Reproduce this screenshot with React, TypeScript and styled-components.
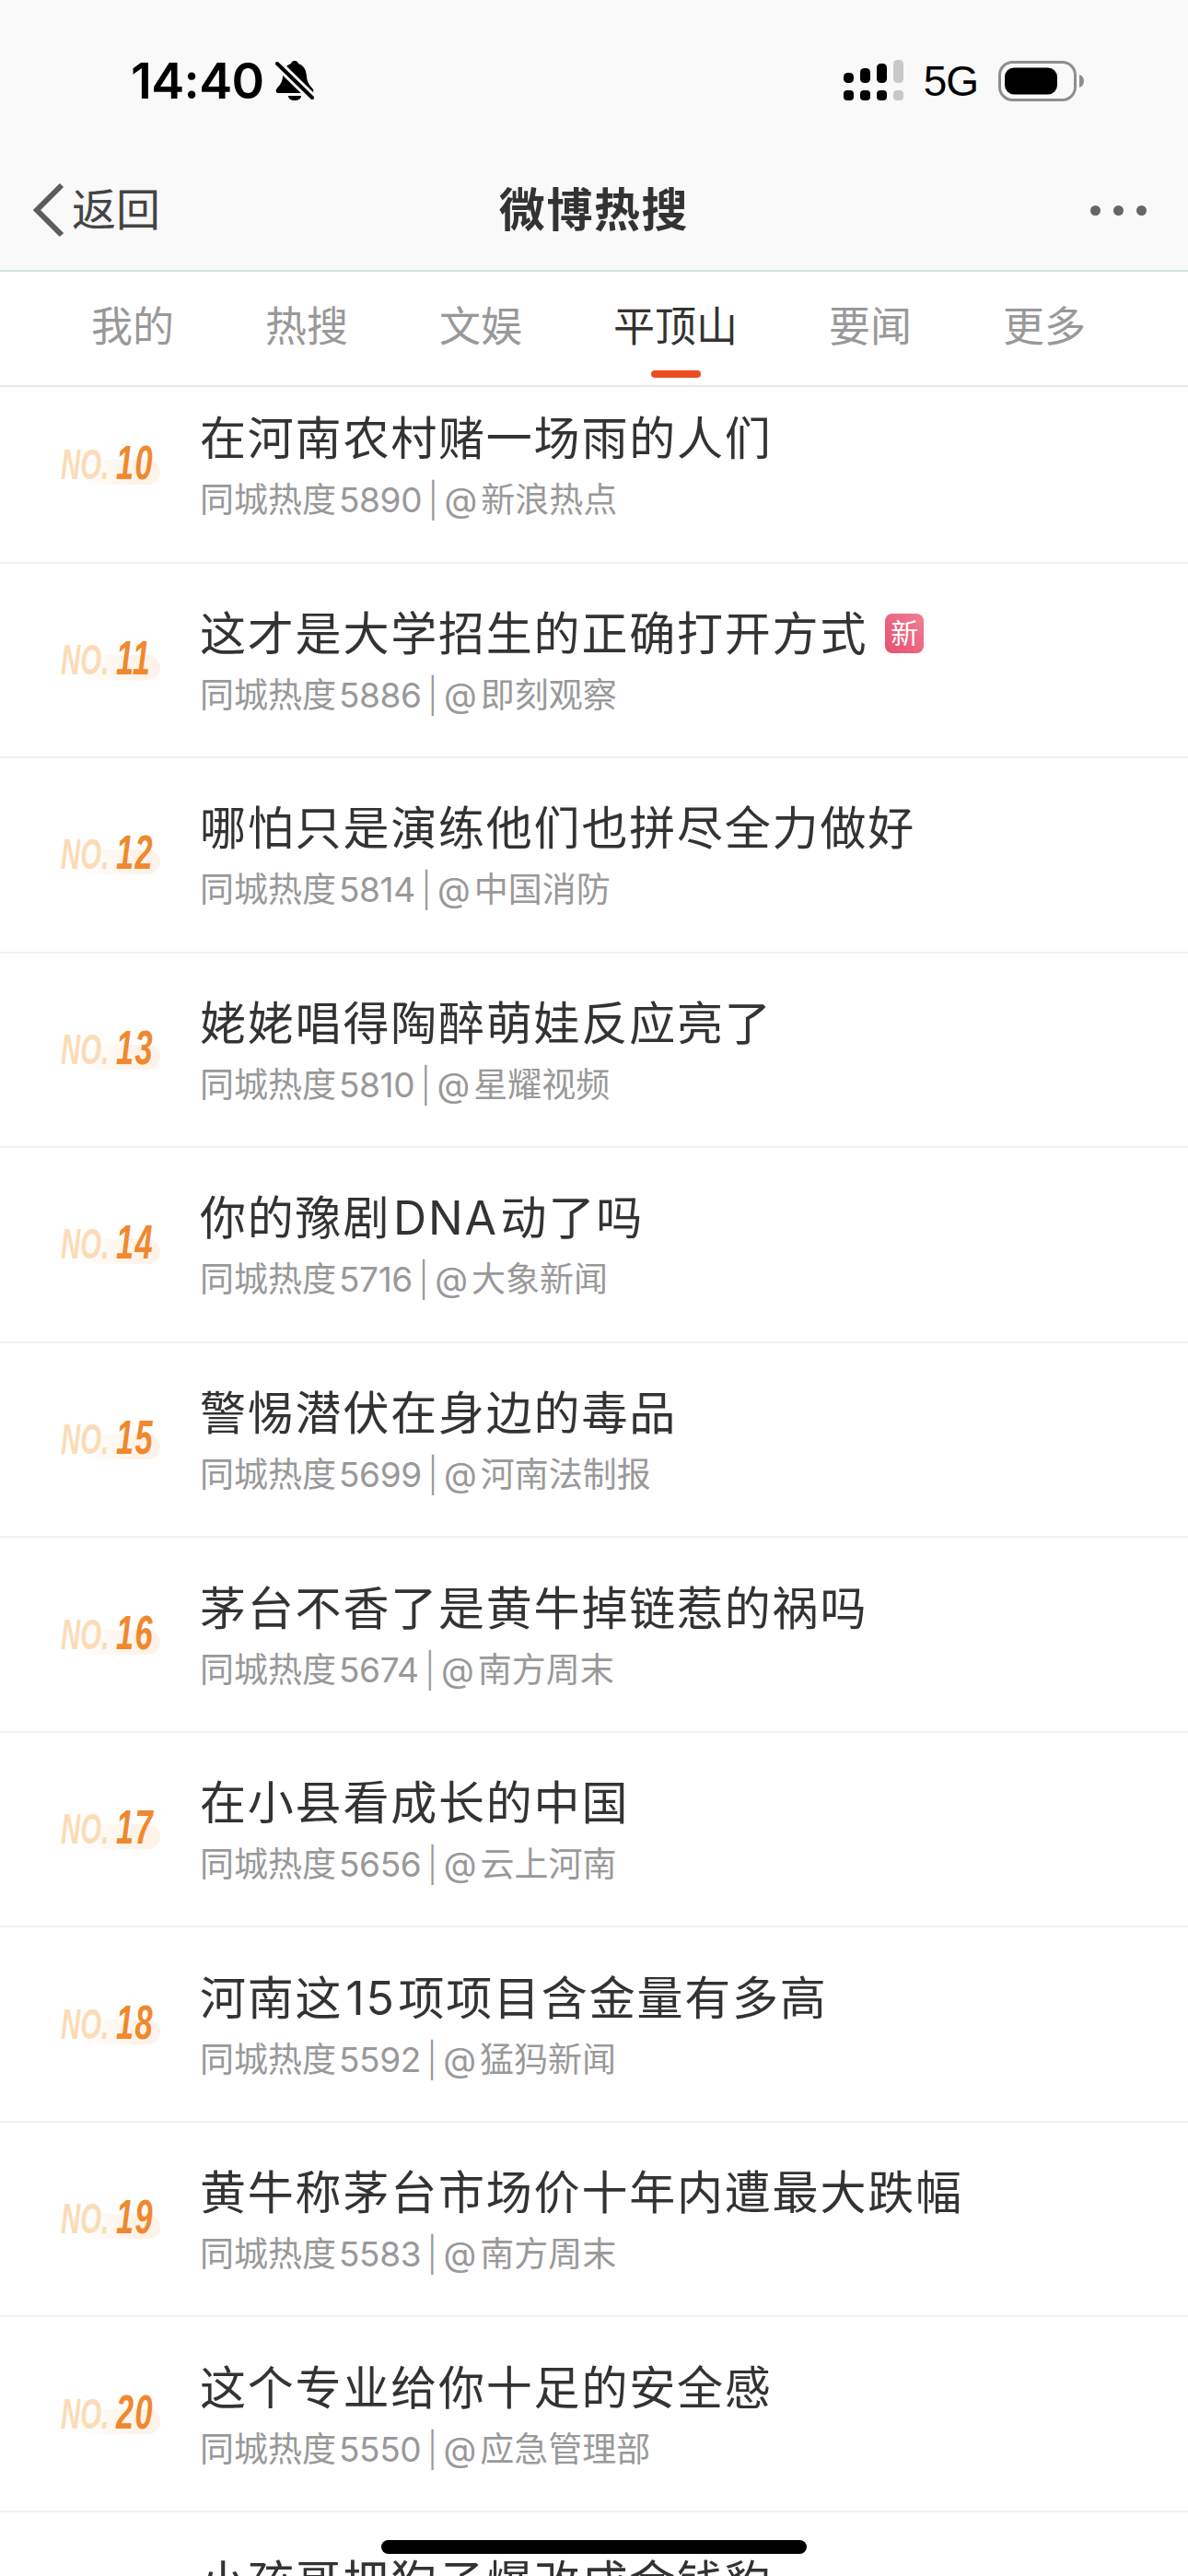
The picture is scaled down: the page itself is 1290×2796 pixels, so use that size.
import * as React from 'react'
import styled, { createGlobalStyle } from 'styled-components'

const GlobalStyle = createGlobalStyle`
  html, body {
    margin: 0;
    padding: 0;
    background: #ffffff;
  }
`

const UI_FONT = `Inter, "Noto Sans CJK SC", sans-serif`

const Screen = styled.div`
  width: 1290px;
  height: 2796px;
  position: relative;
  overflow: hidden;
  display: flex;
  flex-direction: column;
  background: #ffffff;
  font-family: ${UI_FONT};
`

const TopBar = styled.header`
  flex: none;
  background: #f9f9f9;
  border-bottom: 2px solid #d2e4da;
`

const StatusBar = styled.div`
  height: 175px;
  display: flex;
  align-items: center;
  justify-content: space-between;
  padding: 0 113px 0 142px;
  box-sizing: border-box;
`

const StatusLeft = styled.div`
  display: flex;
  align-items: center;
  gap: 12px;
`

const Time = styled.span`
  font-size: 54px;
  font-weight: 600;
  line-height: 60px;
  letter-spacing: -0.6px;
  color: #000000;
`

const StatusRight = styled.div`
  display: flex;
  align-items: center;
`

const NetworkLabel = styled.span`
  font-family: "Liberation Sans", sans-serif;
  font-size: 46px;
  line-height: 50px;
  letter-spacing: -1px;
  color: #000000;
  margin: 0 22px 0 22px;
`

const NavBar = styled.nav`
  height: 118px;
  display: grid;
  grid-template-columns: 1fr auto 1fr;
  align-items: center;
  padding: 0 36px 12px;
  box-sizing: border-box;
`

const BackLink = styled.div`
  display: flex;
  align-items: center;
  gap: 8px;
  font-size: 48px;
  line-height: 60px;
  color: #444444;
`

const PageTitle = styled.h1`
  margin: 0;
  font-size: 50px;
  line-height: 60px;
  letter-spacing: 1.6px;
  font-weight: 700;
  color: #333333;
`

const MoreDots = styled.div`
  justify-self: end;
  display: flex;
  gap: 14px;
  margin-right: 9px;
`

const Dot = styled.span`
  width: 11px;
  height: 11px;
  border-radius: 50%;
  background: #666666;
`

const TabBar = styled.div`
  flex: none;
  height: 125px;
  display: flex;
  gap: 99px;
  padding: 32px 0 0 99px;
  box-sizing: border-box;
  border-bottom: 2px solid #e8e8e8;
`

const Tab = styled.div`
  display: flex;
  flex-direction: column;
  align-items: center;
`

const TabLabel = styled.span<{ $active?: boolean }>`
  font-size: 45px;
  line-height: 56px;
  color: ${p => (p.$active ? '#333333' : '#999999')};
`

const TabMarker = styled.span`
  width: 54px;
  height: 8px;
  margin-top: 19px;
  border-radius: 4px;
  background: #ed4d23;
`

const ListViewport = styled.div`
  flex: 1;
  min-height: 0;
  overflow: hidden;
`

const List = styled.ul`
  list-style: none;
  margin: -20px 0 0;
  padding: 0;
`

const Row = styled.li`
  height: 211.56px;
  box-sizing: border-box;
  border-bottom: 2px solid #f2f2f2;
  display: flex;
  align-items: center;
  padding-left: 66px;
`

const Rank = styled.div`
  flex: none;
  width: 151px;
  height: 43px;
  position: relative;
`

const RankPill = styled.span`
  position: absolute;
  left: 21px;
  top: 16px;
  width: 87px;
  height: 27px;
  border-radius: 0 14px 14px 0;
  background: linear-gradient(90deg, rgba(253, 243, 232, 0) 0%, #fdf3e8 70%, #fdf3e8 100%);
`

const RankPrefix = styled.span`
  position: absolute;
  left: 0;
  top: 0;
  font-family: "Liberation Sans", sans-serif;
  font-size: 46px;
  font-weight: 700;
  font-style: italic;
  line-height: 43px;
  color: #fbdcb6;
  white-space: nowrap;
  transform-origin: left center;
  transform: scaleX(0.64);
`

const RankNumber = styled.span`
  position: absolute;
  left: 60px;
  top: -5px;
  font-family: "Liberation Sans", sans-serif;
  font-size: 52px;
  font-weight: 700;
  font-style: italic;
  line-height: 48px;
  letter-spacing: 2px;
  color: #f0882e;
  white-space: nowrap;
  transform-origin: left center;
  transform: scaleX(0.66);
`

const RowText = styled.div`
  min-width: 0;
`

const TitleLine = styled.div`
  display: flex;
  align-items: center;
  gap: 19px;
  font-size: 50px;
  line-height: 70px;
  letter-spacing: 1.8px;
  word-spacing: -13px;
  color: #333333;
  white-space: nowrap;
`

const NewBadge = styled.span`
  width: 42px;
  height: 43px;
  border-radius: 8px;
  display: flex;
  align-items: center;
  justify-content: center;
  font-size: 30px;
  line-height: 43px;
  letter-spacing: 0;
  color: #ffffff;
  background: linear-gradient(45deg, #e74f6f 0%, #f07f93 100%);
`

const SubLine = styled.div`
  margin-top: 7px;
  font-size: 37px;
  line-height: 50px;
  word-spacing: -4px;
  color: #999999;
  white-space: nowrap;
`

const HeatValue = styled.span`
  margin-left: 3px;
  letter-spacing: -0.4px;
`

const Divider = styled.span`
  font-weight: 300;
`

const AtSign = styled.span`
  margin-right: 4px;
`

const HomeIndicator = styled.div`
  position: absolute;
  left: 414px;
  bottom: 24px;
  width: 462px;
  height: 15px;
  border-radius: 8px;
  background: #000000;
`

const BellOff = () => (
  <svg width="42" height="45" viewBox="0 0 42 45">
    <path
      d="M21 1c-2 0-3.500 1.200-4 3C11 6 8.500 11 8 18 7.600 25 4 28 1 32c-1 2 0 4 2 4h36c2 0 3-2 2-4C38 28 34.400 25 34 18 33.500 11 31 6 25 4 24.500 2.200 23 1 21 1z"
      fill="#000"
    />
    <path d="M14 39h14c0 3-3 5-7 5s-7-2-7-5z" fill="#000" />
    <line x1="1" y1="3" x2="41" y2="42" stroke="#f9f9f9" strokeWidth="10" />
    <line x1="2" y1="4" x2="40" y2="41" stroke="#000" strokeWidth="4" strokeLinecap="round" />
  </svg>
)

const SignalDots = () => (
  <svg width="65" height="45" viewBox="0 0 65 45">
    <rect x="0" y="14" width="11" height="11" rx="4.500" fill="#000" />
    <rect x="18" y="9" width="11" height="16" rx="4.500" fill="#000" />
    <rect x="36" y="4" width="11" height="21" rx="4.500" fill="#000" />
    <rect x="54" y="0" width="11" height="25" rx="4.500" fill="#c8c8c8" />
    <rect x="0" y="33" width="11" height="11" rx="4" fill="#000" />
    <rect x="18" y="33" width="11" height="11" rx="4" fill="#000" />
    <rect x="36" y="33" width="11" height="11" rx="4" fill="#000" />
    <rect x="54" y="33" width="11" height="11" rx="4" fill="#c8c8c8" />
  </svg>
)

const Battery = () => (
  <svg width="93" height="44" viewBox="0 0 93 44">
    <rect x="1.500" y="1.500" width="82" height="41" rx="14" fill="none" stroke="#8e8e8e" strokeWidth="3" />
    <rect x="7" y="7.500" width="57" height="29" rx="10" fill="#000" />
    <path d="M88 15c3 1 5 3.500 5 7s-2 6-5 7z" fill="#8e8e8e" />
  </svg>
)

const BackChevron = () => (
  <svg width="34" height="60" viewBox="0 0 34 60">
    <path d="M31 3 4 30l27 27" fill="none" stroke="#5c5c5c" strokeWidth="6" />
  </svg>
)

type HotItem = {
  no: number
  title: string
  heat: number
  source: string
  isNew?: boolean
}

const items: HotItem[] = [
  { no: 10, title: '在河南农村赌一场雨的人们', heat: 5890, source: '新浪热点' },
  { no: 11, title: '这才是大学招生的正确打开方式', heat: 5886, source: '即刻观察', isNew: true },
  { no: 12, title: '哪怕只是演练他们也拼尽全力做好', heat: 5814, source: '中国消防' },
  { no: 13, title: '姥姥唱得陶醉萌娃反应亮了', heat: 5810, source: '星耀视频' },
  { no: 14, title: '你的豫剧 DNA 动了吗', heat: 5716, source: '大象新闻' },
  { no: 15, title: '警惕潜伏在身边的毒品', heat: 5699, source: '河南法制报' },
  { no: 16, title: '茅台不香了是黄牛掉链惹的祸吗', heat: 5674, source: '南方周末' },
  { no: 17, title: '在小县看成长的中国', heat: 5656, source: '云上河南' },
  { no: 18, title: '河南这 15 项项目含金量有多高', heat: 5592, source: '猛犸新闻' },
  { no: 19, title: '黄牛称茅台市场价十年内遭最大跌幅', heat: 5583, source: '南方周末' },
  { no: 20, title: '这个专业给你十足的安全感', heat: 5550, source: '应急管理部' },
  { no: 21, title: '小孩哥把狗子爆改成金钱豹', heat: 5542, source: '新浪热点' },
]

const tabs = ['我的', '热搜', '文娱', '平顶山', '要闻', '更多']

export default function App() {
  return (
    <Screen>
      <GlobalStyle />
      <TopBar>
        <StatusBar>
          <StatusLeft>
            <Time>14:40</Time>
            <BellOff />
          </StatusLeft>
          <StatusRight>
            <SignalDots />
            <NetworkLabel>5G</NetworkLabel>
            <Battery />
          </StatusRight>
        </StatusBar>
        <NavBar>
          <BackLink>
            <BackChevron />
            返回
          </BackLink>
          <PageTitle>微博热搜</PageTitle>
          <MoreDots>
            <Dot />
            <Dot />
            <Dot />
          </MoreDots>
        </NavBar>
      </TopBar>

      <TabBar>
        {tabs.map(tab => (
          <Tab key={tab}>
            <TabLabel $active={tab === '平顶山'}>{tab}</TabLabel>
            {tab === '平顶山' && <TabMarker />}
          </Tab>
        ))}
      </TabBar>

      <ListViewport>
        <List>
          {items.map(item => (
            <Row key={item.no}>
              <Rank>
                <RankPill />
                <RankPrefix>NO.</RankPrefix>
                <RankNumber>{item.no}</RankNumber>
              </Rank>
              <RowText>
                <TitleLine>
                  {item.title}
                  {item.isNew && <NewBadge>新</NewBadge>}
                </TitleLine>
                <SubLine>
                  同城热度<HeatValue>{item.heat}</HeatValue> <Divider>|</Divider> <AtSign>@</AtSign>{item.source}
                </SubLine>
              </RowText>
            </Row>
          ))}
        </List>
      </ListViewport>

      <HomeIndicator />
    </Screen>
  )
}
